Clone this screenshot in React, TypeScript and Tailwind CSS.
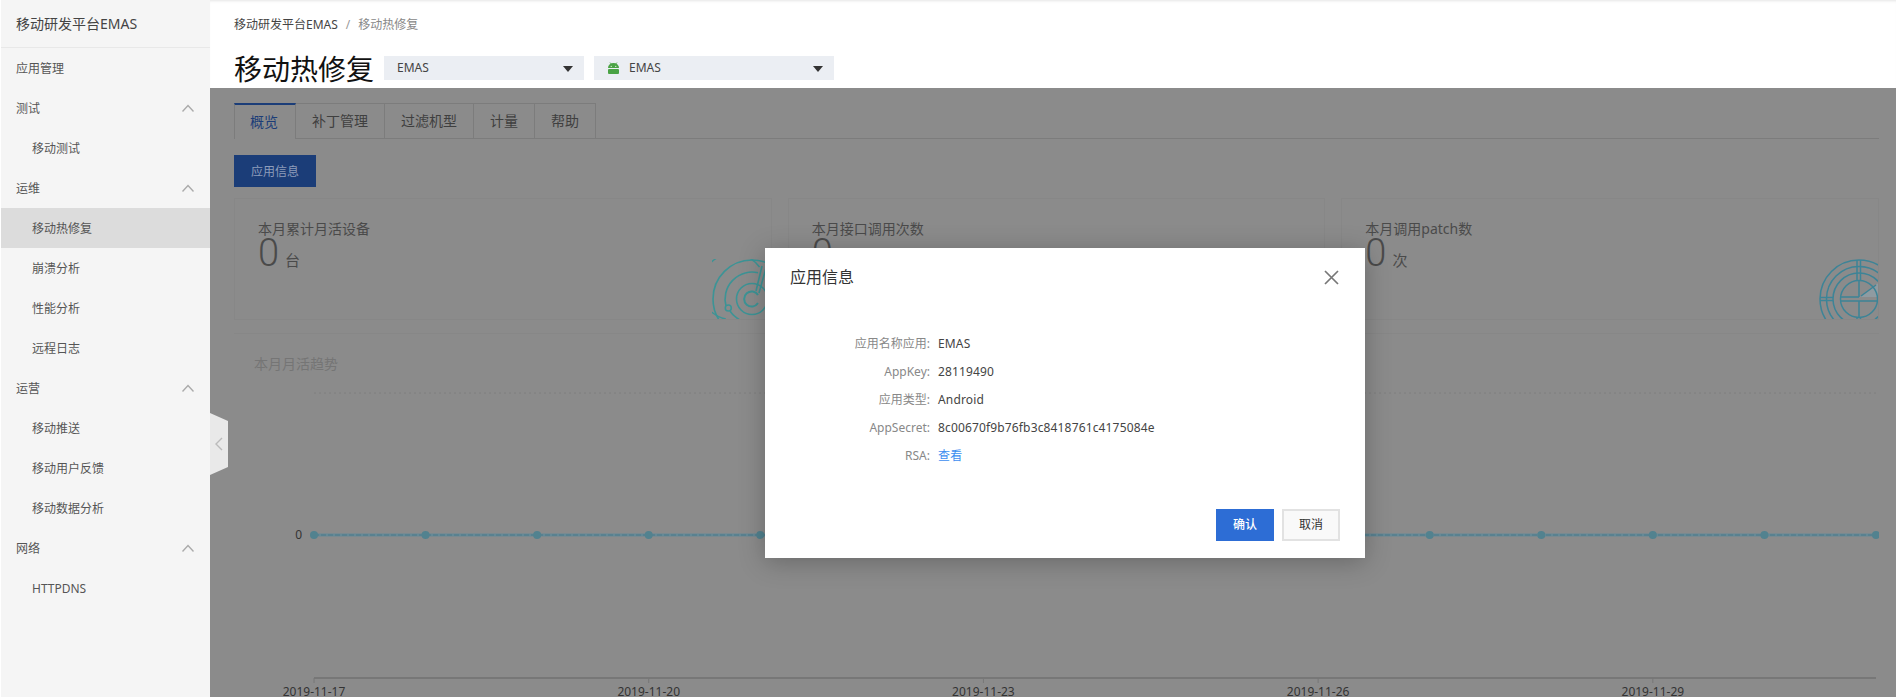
const MENU = [
  { label: '应用管理' },
  { label: '测试', group: true },
  { label: '移动测试', sub: true },
  { label: '运维', group: true },
  { label: '移动热修复', sub: true, active: true },
  { label: '崩溃分析', sub: true },
  { label: '性能分析', sub: true },
  { label: '远程日志', sub: true },
  { label: '运营', group: true },
  { label: '移动推送', sub: true },
  { label: '移动用户反馈', sub: true },
  { label: '移动数据分析', sub: true },
  { label: '网络', group: true },
  { label: 'HTTPDNS', sub: true },
]

const TABS = ['概览', '补丁管理', '过滤机型', '计量', '帮助']

const CARDS = [
  { title: '本月累计月活设备', unit: '台', icon: 'radar' },
  { title: '本月接口调用次数', unit: '次', icon: 'radar' },
  { title: '本月调用patch数', unit: '次', icon: 'pie' },
]

const INFO = [
  { label: '应用名称应用:', value: 'EMAS' },
  { label: 'AppKey:', value: '28119490' },
  { label: '应用类型:', value: 'Android' },
  { label: 'AppSecret:', value: '8c00670f9b76fb3c8418761c4175084e' },
  { label: 'RSA:', value: '查看', link: true },
]

const TICKS = [
  { i: 0, text: '2019-11-17' },
  { i: 3, text: '2019-11-20' },
  { i: 6, text: '2019-11-23' },
  { i: 9, text: '2019-11-26' },
  { i: 12, text: '2019-11-29' },
]

const xAt = (i: number) => 80 + i * 111.57

function RadarIcon() {
  return (
    <svg width="80" height="80" viewBox="0 0 80 80" fill="none" stroke="#3c9496" strokeWidth="1.6">
      <circle cx="40" cy="40" r="39" />
      <path d="M13.8 60 A33 33 0 1 1 47.5 7.9" />
      <path d="M14 47 A27 27 0 0 1 46 13.7" />
      <path d="M18 52 Q21 57 28 61" />
      <circle cx="16.3" cy="49" r="3" />
      <circle cx="40" cy="40" r="15.5" />
      <path d="M46 36 A7.5 7.5 0 1 0 46 44" strokeWidth="2" />
      <path d="M44 32 L50 7 M47 34 L54 9" />
    </svg>
  )
}

function PieIcon() {
  return (
    <svg width="80" height="80" viewBox="0 0 80 80" fill="none" stroke="#3d8497" strokeWidth="1.5">
      <path d="M41 38 L62 22 A27 27 0 0 1 67 38 Z" fill="#8f9ba1" stroke="none" />
      <circle cx="40" cy="40" r="39" />
      <circle cx="40" cy="40" r="32.5" />
      <circle cx="40" cy="40" r="26" />
      <circle cx="40" cy="40" r="18.5" />
      <path d="M38 1 V21 M41.5 1 V21" />
      <path d="M1 38.5 H14 M1 41.5 H14" />
      <path d="M40 21 V38 M40 42 V59 M21 42 H59 M21 38 H40 M42 37 L57 26" />
      <path d="M38 59 V79 M41.5 59 V79" />
    </svg>
  )
}

function AndroidIcon() {
  return (
    <svg width="13" height="12" viewBox="0 0 13 12" fill="#4aa345">
      <path d="M1 6 A5.5 5 0 0 1 12 6 Z" />
      <path d="M3 0.5 L4.5 2.5 M10 0.5 L8.5 2.5" stroke="#4aa345" strokeWidth="0.8" />
      <rect x="1" y="7" width="11" height="5" rx="1" />
      <circle cx="4.2" cy="4.3" r="0.6" fill="#fff" />
      <circle cx="8.8" cy="4.3" r="0.6" fill="#fff" />
    </svg>
  )
}

function Select({ text, width, android }: { text: string; width: string; android?: boolean }) {
  return (
    <div className={`flex h-6 items-center bg-[#ebeef3] pl-[13px] pr-[11px] text-xs text-[#444] ${width}`}>
      {android && (
        <span className="mr-[9px] flex">
          <AndroidIcon />
        </span>
      )}
      <span className="flex-1">{text}</span>
      <span className="mt-[2px] h-0 w-0 border-x-[5px] border-t-[6px] border-x-transparent border-t-[#333]" />
    </div>
  )
}

function Chart() {
  return (
    <svg width="1645" height="323" className="-ml-5 block">
      <line x1="80" x2="1642" y1="19" y2="19" stroke="#7f7f7f" strokeDasharray="2 3" />
      <text x="68" y="165" textAnchor="end" fontSize="12" fill="#333">0</text>
      <line x1="80" x2="1642" y1="161" y2="161" stroke="#668a97" strokeWidth="3" />
      <line x1="80" x2="1642" y1="161" y2="161" stroke="#4d7888" strokeDasharray="5 2" />
      {Array.from({ length: 15 }, (_, i) => (
        <circle key={i} cx={xAt(i)} cy="161" r="4" fill="#52828f" />
      ))}
      <line x1="80" x2="1642" y1="304" y2="304" stroke="#777" strokeWidth="2" />
      {TICKS.map((t) => (
        <g key={t.i}>
          <line x1={xAt(t.i)} x2={xAt(t.i)} y1="304" y2="309" stroke="#777" />
          <text x={xAt(t.i)} y="322" textAnchor="middle" fontSize="12" fill="#333">{t.text}</text>
        </g>
      ))}
    </svg>
  )
}

export default function App() {
  return (
    <div className="relative flex h-[697px] w-[1896px] overflow-hidden bg-[#8b8b8b] font-['Noto_Sans','Noto_Sans_CJK_SC',sans-serif] text-xs">
      {/* Sidebar */}
      <aside className="relative z-10 w-[210px] shrink-0 border-l border-white bg-[#f5f5f5] text-[#555]">
        <div className="flex h-12 items-center border-b border-[#e8e8e8] pl-[15px] text-sm text-[#444]">移动研发平台EMAS</div>
        {MENU.map((item) => (
          <div
            key={item.label}
            className={`flex h-10 items-center justify-between pr-4 ${item.sub ? 'pl-[31px]' : 'pl-[15px]'} ${item.active ? 'bg-[#dcdcdc]' : ''}`}
          >
            <span className="pt-[2px]">{item.label}</span>
            {item.group && (
              <svg width="12" height="8" viewBox="0 0 12 8" fill="none" stroke="#aaa" strokeWidth="1.4">
                <path d="M0.5 7.5 L6 1.5 L11.5 7.5" />
              </svg>
            )}
          </div>
        ))}
        <div className="absolute -right-[18px] top-[413px] flex h-[62px] w-[18px] items-center justify-center bg-[#e9e9e9] [clip-path:polygon(0_0,100%_13%,100%_87%,0_100%)]">
          <svg width="8" height="14" viewBox="0 0 8 14" fill="none" stroke="#bbb" strokeWidth="1.4">
            <path d="M7 1 L1 7 L7 13" />
          </svg>
        </div>
      </aside>

      <main className="flex min-w-0 flex-1 flex-col">
        {/* Page header */}
        <header className="h-[88px] shrink-0 bg-white pl-6 shadow-[inset_0_3px_3px_-2px_#e5e5e5]">
          <div className="flex h-[49px] items-center gap-2 pt-px">
            <span className="text-[#444]">移动研发平台EMAS</span>
            <span className="text-[#999]">/</span>
            <span className="text-[#888]">移动热修复</span>
          </div>
          <div className="-mt-px flex h-10 items-center">
            <h1 className="mr-[10px] pt-[2px] text-[28px] leading-10 text-[#111]">移动热修复</h1>
            <Select text="EMAS" width="w-[200px]" />
            <div className="w-[10px]" />
            <Select text="EMAS" width="w-[240px]" android />
          </div>
        </header>

        {/* Dimmed content */}
        <div className="flex w-[1669px] flex-col pl-6">
          <div className="mt-[15px] flex h-[36px] border-b border-[#7c7c7c] text-sm text-[#3f3f3f]">
            {TABS.map((tab, i) => (
              <div
                key={tab}
                className={
                  i === 0
                    ? 'flex h-[36px] w-[62px] items-center justify-center border-r border-l border-t-2 border-[#7c7c7c] border-t-[#1b3d78] bg-[#8b8b8b] pr-[2px] text-[#1b3d78]'
                    : 'flex h-[35px] items-center border-r border-t border-[#7c7c7c] px-4'
                }
              >
                {tab}
              </div>
            ))}
          </div>

          <div className="mt-4 flex h-8 w-[82px] items-center justify-center bg-[#1b3d78] pt-px text-[#8d9cba]">应用信息</div>

          <div className="mt-[11px] grid h-[122px] grid-cols-3 gap-4">
            {CARDS.map((card) => (
              <div key={card.title} className="relative overflow-hidden border border-[#878787] pl-[23px] pt-5">
                <div className="text-sm leading-5 text-[#4a4a4a]">{card.title}</div>
                <div className="flex items-baseline gap-[6px] text-[#4a4a4a]">
                  <span className="font-['Roboto',sans-serif] text-[38px] font-light leading-7">0</span>
                  <span className="text-[15px]">{card.unit}</span>
                </div>
                <div className="absolute -right-[21px] top-[60px]">{card.icon === 'pie' ? <PieIcon /> : <RadarIcon />}</div>
              </div>
            ))}
          </div>

          <section className="mt-[13px] border-t border-[#878787] pl-5 pt-5">
            <div className="h-5 text-sm leading-5 text-[#757575]">本月月活趋势</div>
            <Chart />
          </section>
        </div>
      </main>

      {/* Modal */}
      <div className="absolute left-[765px] top-[248px] z-20 flex h-[310px] w-[600px] flex-col bg-white shadow-[0_4px_24px_rgba(0,0,0,0.25)]">
        <div className="flex h-[58px] shrink-0 items-center justify-between pl-[25px] pr-[26px]">
          <span className="text-base text-[#333]">应用信息</span>
          <svg width="15" height="15" viewBox="0 0 15 15" fill="none" stroke="#777" strokeWidth="1.7">
            <path d="M1 1 L14 14 M14 1 L1 14" />
          </svg>
        </div>
        <div className="pt-6">
          {INFO.map((row) => (
            <div key={row.label} className="flex h-7 items-center gap-2">
              <span className="w-[165px] text-right text-[#888]">{row.label}</span>
              <span className={`tracking-[0.15px] ${row.link ? 'text-[#3d8ef0]' : 'text-[#444]'}`}>{row.value}</span>
            </div>
          ))}
        </div>
        <div className="mt-[39px] flex justify-end gap-2 pr-[25px]">
          <button className="h-8 w-[58px] bg-[#2d6dd5] font-medium text-white">确认</button>
          <button className="h-8 w-[58px] border-2 border-[#e2e2e2] bg-[#f9f9f9] text-[#333]">取消</button>
        </div>
      </div>
    </div>
  )
}
